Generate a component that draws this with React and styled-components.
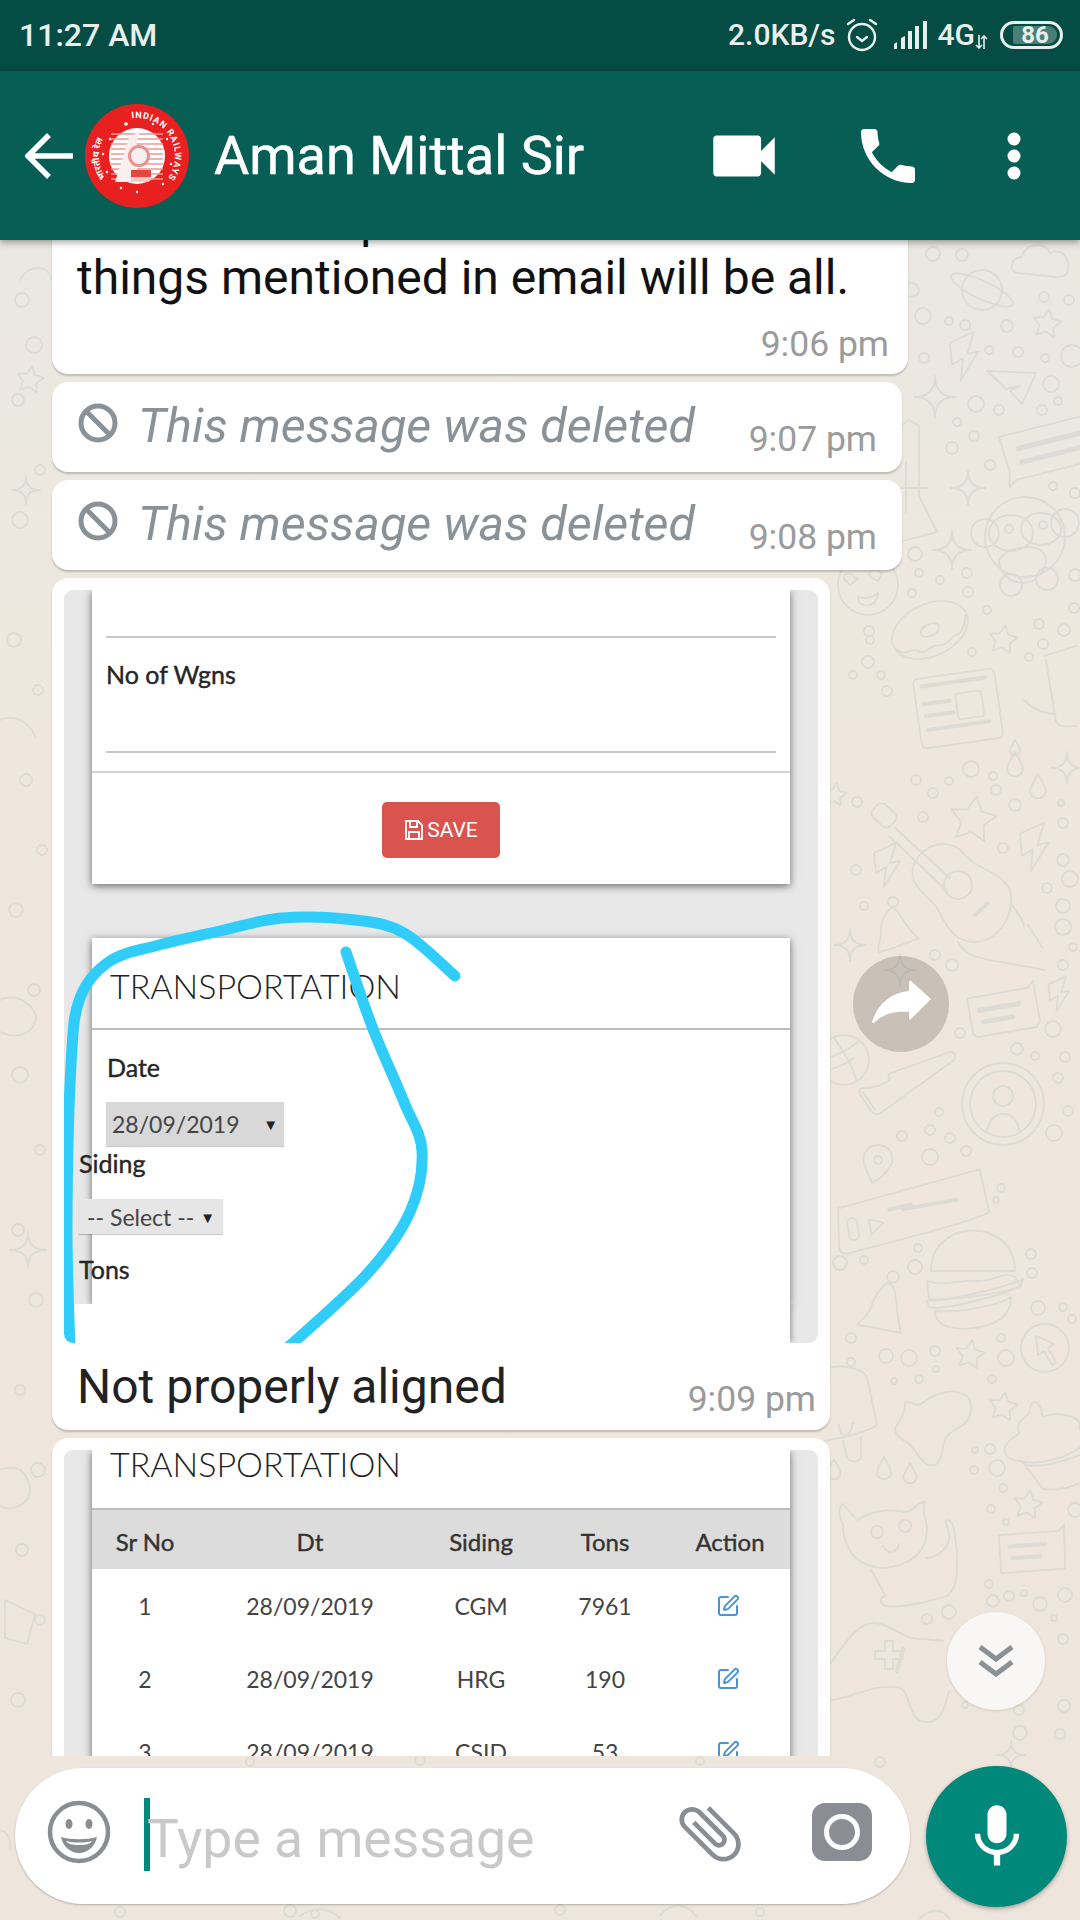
import React from "react";
import styled, { createGlobalStyle } from "styled-components";
import { SquarePen } from "lucide-react";

const GlobalStyle = createGlobalStyle`
  html, body {
    margin: 0;
    padding: 0;
    width: 1080px;
    height: 1920px;
    overflow: hidden;
    font-family: Roboto, "Liberation Sans", sans-serif;
  }
  * { box-sizing: border-box; }
`;

const Screen = styled.div`
  position: relative;
  isolation: isolate;
  width: 1080px;
  height: 1920px;
  display: flex;
  flex-direction: column;
  overflow: hidden;
  background: linear-gradient(180deg, #e8e7e0 0%, #ecE8e0 24%, #efe7de 38%, #eee6dd 100%);
`;

const WallpaperSvg = styled.svg`
  position: absolute;
  inset: 0;
  z-index: -1;
  fill: none;
  stroke: #dcdbd5;
  stroke-width: 1.8;
  stroke-linejoin: round;
  stroke-linecap: round;
`;

const StatusBar = styled.div`
  height: 71px;
  flex-shrink: 0;
  background: #054c44;
  color: #e8f0ee;
  display: flex;
  align-items: center;
  justify-content: space-between;
  padding: 0 17px 2px 19px;
  font-weight: 500;
  font-size: 32px;
`;

const StatusRight = styled.div`
  display: flex;
  align-items: center;
`;

const StatusText = styled.span`
  font-size: ${(p) => p.$size || 30}px;
  margin-left: ${(p) => p.$left || 0}px;
`;

const Battery = styled.div`
  margin-left: 12px;
  width: 63px;
  height: 28px;
  border: 3px solid #e8f0ee;
  border-radius: 14px;
  padding: 2px;
  display: flex;
`;

const BatteryFill = styled.div`
  margin-left: 8px;
  width: 44px;
  height: 100%;
  background: #4a7f75;
  border-radius: 2px 9px 9px 2px;
  display: flex;
  align-items: center;
  justify-content: center;
  font-size: 24px;
  font-weight: 700;
`;

const Header = styled.header`
  position: relative;
  z-index: 2;
  height: 169px;
  flex-shrink: 0;
  background: #075e55;
  box-shadow: 0 2px 7px rgba(0, 0, 0, 0.4);
  display: flex;
  align-items: center;
  padding-left: 25px;
  color: #fff;
`;

const Avatar = styled.svg`
  margin-left: 12px;
  width: 104px;
  height: 104px;
  flex-shrink: 0;
`;

const ContactName = styled.div`
  margin-left: 25px;
  flex: 1;
  font-size: 54px;
  font-weight: 400;
  -webkit-text-stroke: 0.5px #fff;
`;

const HeaderIcon = styled.svg`
  flex-shrink: 0;
  fill: #fff;
  margin-right: ${(p) => p.$right}px;
`;

const List = styled.main`
  height: 1516px;
  flex-shrink: 0;
  overflow: hidden;
  display: flex;
  flex-direction: column;
  align-items: flex-start;
  gap: 8px;
  padding-left: 52px;
`;

const Bubble = styled.div`
  flex-shrink: 0;
  width: ${(p) => p.$width}px;
  background: #fff;
  border-radius: 16px;
  box-shadow: 0 2px 2px rgba(0, 0, 0, 0.2);
`;

const TextBubble = styled(Bubble)`
  margin-top: -48px;
  padding: 0 19px 0 25px;
`;

const MessageText = styled.div`
  font-size: 48px;
  line-height: 57px;
  color: #111;
  white-space: nowrap;
`;

const Time = styled.div`
  font-size: 35.5px;
  line-height: 40px;
  color: #9b9b9b;
  text-align: right;
  white-space: nowrap;
`;

const TextTime = styled(Time)`
  padding: 18px 0 10px;
`;

const DeletedBubble = styled(Bubble)`
  height: 90px;
  display: flex;
  align-items: center;
  padding: 0 25px 0 26px;
`;

const DeletedIcon = styled.svg`
  flex-shrink: 0;
  margin-top: -8px;
`;

const DeletedText = styled.div`
  flex: 1;
  margin: -4px 0 0 20px;
  font-size: 48.5px;
  font-style: italic;
  color: #8a9298;
  white-space: nowrap;
`;

const DeletedTime = styled(Time)`
  margin-top: 24px;
`;

const ImageBubble = styled(Bubble)`
  padding: 12px 12px 0;
`;

const Shot = styled.div`
  position: relative;
  width: 754px;
  height: ${(p) => p.$height}px;
  background: #e8e8e8;
  border-radius: 9px;
  overflow: hidden;
  font-family: Lato, "Noto Sans", sans-serif;
  color: #222;
`;

const ShotCard = styled.div`
  margin: 0 28px;
  background: #fff;
  box-shadow: 0 2px 8px rgba(0, 0, 0, 0.55);
  height: ${(p) => p.$height}px;
  margin-bottom: ${(p) => p.$bottom || 0}px;
`;

const Field = styled.div`
  margin: 0 14px;
  height: ${(p) => p.$height}px;
  border-bottom: 2px solid #c9c9c9;
  padding-top: ${(p) => p.$top || 0}px;
`;

const Label = styled.div`
  font-size: 25px;
  line-height: 30px;
  font-weight: 400;
  -webkit-text-stroke: 0.4px #262626;
  color: #262626;
  margin-left: ${(p) => p.$left || 0}px;
  margin-top: ${(p) => p.$top || 0}px;
`;

const CardFooter = styled.div`
  margin-top: 18px;
  border-top: 2px solid #d2d2d2;
  display: flex;
  justify-content: center;
  padding-top: 29px;
`;

const SaveButton = styled.div`
  width: 118px;
  height: 56px;
  background: #d9534f;
  border-radius: 5px;
  color: #fff;
  font-family: Roboto, sans-serif;
  font-size: 21px;
  display: flex;
  align-items: center;
  justify-content: center;
  gap: 3px;
`;

const CardTitle = styled.div`
  height: ${(p) => p.$height}px;
  padding: ${(p) => p.$top}px 0 0 ${(p) => p.$left}px;
  border-bottom: 2px solid #bdbdbd;
  font-size: 34px;
  line-height: ${(p) => p.$line}px;
  font-weight: 300;
  color: #222;
`;

const SelectBox = styled.div`
  margin-left: ${(p) => p.$left}px;
  margin-top: ${(p) => p.$top}px;
  width: ${(p) => p.$width}px;
  height: ${(p) => p.$height}px;
  background: ${(p) => p.$bg};
  box-shadow: 0 1px 1px rgba(0, 0, 0, 0.2);
  font-size: 23px;
  color: #444;
  display: flex;
  align-items: center;
  justify-content: space-between;
  padding: 0 ${(p) => p.$pad}px;
`;

const Caret = styled.span`
  font-size: 15px;
  color: #222;
`;

const ShotFiller = styled.div`
  position: relative;
  height: 39px;
  margin-right: 28px;
  background: #fff;
  box-shadow: 3px 0 5px -1px rgba(0, 0, 0, 0.3);
  clip-path: inset(0 -8px 0 0);
`;

const InkSvg = styled.svg`
  position: absolute;
  left: 0;
  top: 0;
  fill: none;
  stroke: #30cdfb;
  stroke-width: 11;
  stroke-linecap: round;
  stroke-linejoin: round;
`;

const CaptionRow = styled.div`
  height: 87px;
  display: flex;
  align-items: center;
  justify-content: space-between;
  padding: 0 0 0 13px;
`;

const Caption = styled.div`
  font-size: 48px;
  color: #222;
`;

const CaptionTime = styled(Time)`
  margin-top: 24px;
  margin-right: 2px;
`;

const TableGrid = styled.div`
  display: grid;
  grid-template-columns: 106px 224px 118px 130px 120px;
  text-align: center;
  align-items: center;
`;

const TableHead = styled(TableGrid)`
  height: 59px;
  background: #dcdcdc;
  font-size: 24px;
  font-weight: 400;
  -webkit-text-stroke: 0.4px #333;
  color: #333;
  padding-top: 3px;
`;

const TableRow = styled(TableGrid)`
  height: 73px;
  font-size: 23px;
  color: #444;
`;

const EditCell = styled.div`
  display: flex;
  justify-content: center;
  color: #4b93d8;
  padding-right: 4px;
`;

const Footer = styled.footer`
  flex: 1;
  display: flex;
  align-items: flex-start;
  padding: 12px 0 0 15px;
`;

const Composer = styled.div`
  width: 895px;
  height: 136px;
  background: #fff;
  border-radius: 68px;
  box-shadow: 0 1px 2px rgba(0, 0, 0, 0.25);
  display: flex;
  align-items: center;
  padding-left: 32px;
`;

const TypeCaret = styled.div`
  width: 6px;
  height: 73px;
  background: #00897a;
  margin-left: 33px;
  flex-shrink: 0;
  margin-top: -3px;
`;

const Placeholder = styled.div`
  flex: 1;
  font-size: 53.5px;
  color: #c9c9c9;
  margin: 5px 0 0 -3px;
  white-space: nowrap;
`;

const ClipIcon = styled.svg`
  flex-shrink: 0;
  margin-right: 64px;
  margin-top: -6px;
  transform: rotate(-45deg);
  fill: #8a8e94;
`;

const CameraIcon = styled.svg`
  flex-shrink: 0;
  margin-right: 38px;
  margin-top: -8px;
`;

const MicButton = styled.div`
  width: 141px;
  height: 141px;
  margin: -2px 0 0 16px;
  border-radius: 50%;
  background: #00897a;
  box-shadow: 0 2px 4px rgba(0, 0, 0, 0.3);
  display: flex;
  align-items: center;
  justify-content: center;
  fill: #fff;
`;

const RoundButton = styled.div`
  position: absolute;
  left: ${(p) => p.$x - p.$r}px;
  top: ${(p) => p.$y - p.$r}px;
  width: ${(p) => p.$r * 2}px;
  height: ${(p) => p.$r * 2}px;
  border-radius: 50%;
  background: ${(p) => p.$bg};
  box-shadow: ${(p) => p.$shadow || "none"};
  display: flex;
  align-items: center;
  justify-content: center;
`;

const star = (x, y, r) => {
  let d = "";
  for (let i = 0; i < 10; i++) {
    const a = (Math.PI / 5) * i - Math.PI / 2 + 0.15;
    const rad = i % 2 ? r * 0.5 : r;
    d += `${i ? "L" : "M"}${x + Math.cos(a) * rad} ${y + Math.sin(a) * rad}`;
  }
  return d + "Z";
};
const sparkle = (x, y, r) =>
  `M${x} ${y - r}Q${x} ${y} ${x + r} ${y}Q${x} ${y} ${x} ${y + r}Q${x} ${y} ${x - r} ${y}Q${x} ${y} ${x} ${y - r}Z`;
const bolt = (x, y, s) =>
  `M${x + 10 * s} ${y - 22 * s}L${x - 12 * s} ${y - 12 * s}L${x - 10 * s} ${y + 8 * s}L${x} ${y + 2 * s}L${x - 2 * s} ${y + 22 * s}L${x + 14 * s} ${y - 4 * s}L${x + 4 * s} ${y - 2 * s}Z`;
const drop = (x, y, s) =>
  `M${x} ${y - 12 * s}C${x + 4 * s} ${y - 4 * s} ${x + 8 * s} ${y} ${x + 7 * s} ${y + 5 * s}C${x + 5 * s} ${y + 12 * s} ${x - 5 * s} ${y + 12 * s} ${x - 7 * s} ${y + 5 * s}C${x - 8 * s} ${y} ${x - 4 * s} ${y - 4 * s} ${x} ${y - 12 * s}Z`;

// smooth line through page points, moved into the screenshot's own coordinates
const inkLine = (points) => {
  const pts = points.map(([x, y]) => [x - 64, y - 590]);
  let d = `M${pts[0][0]} ${pts[0][1]}`;
  for (let i = 0; i < pts.length - 1; i++) {
    const a = pts[i - 1] || pts[i];
    const b = pts[i];
    const c = pts[i + 1];
    const e = pts[i + 2] || c;
    d += `C${b[0] + (c[0] - a[0]) / 6} ${b[1] + (c[1] - a[1]) / 6} ${c[0] - (e[0] - b[0]) / 6} ${c[1] - (e[1] - b[1]) / 6} ${c[0]} ${c[1]}`;
  }
  return d;
};

const inkTop = [
  [455, 976], [404, 933], [355, 920], [282, 918], [220, 931], [159, 945], [110, 961],
  [80, 998], [71, 1065], [67, 1225], [70, 1350],
];
const inkRight = [
  [346, 952], [373, 1029], [404, 1102], [422, 1151], [410, 1212], [367, 1274], [285, 1350],
];

const dots = [
  [933, 254, 7], [962, 255, 6], [912, 290, 7], [923, 316, 8], [949, 321, 4], [965, 325, 5], [1007, 326, 6],
  [1044, 297, 5], [1069, 300, 5], [924, 358, 5], [989, 350, 4], [1018, 352, 5], [1045, 358, 4], [1072, 356, 11],
  [1051, 384, 8], [1058, 401, 4], [976, 404, 8], [999, 410, 5], [1042, 410, 5], [957, 422, 4], [974, 436, 5],
  [952, 448, 6], [990, 465, 5], [1053, 486, 4], [1075, 493, 5], [915, 554, 7], [919, 573, 4], [940, 580, 4],
  [967, 573, 5], [912, 593, 4], [968, 592, 5], [1075, 575, 6], [1074, 608, 5], [987, 610, 4], [1039, 624, 5],
  [1064, 630, 6], [1043, 644, 5], [972, 652, 4], [1029, 657, 4], [869, 631, 5], [870, 640, 4], [868, 662, 6],
  [853, 675, 4], [881, 675, 4], [887, 691, 5], [971, 769, 8], [993, 776, 4], [916, 780, 5], [949, 781, 4],
  [933, 793, 5], [996, 790, 5], [1015, 805, 6], [1061, 803, 3], [857, 802, 5], [923, 817, 5], [1003, 848, 5],
  [1063, 823, 5], [1063, 860, 6], [1070, 879, 8], [856, 870, 5], [1047, 888, 5], [864, 906, 4], [1063, 906, 7],
  [1063, 927, 8], [1073, 947, 4], [935, 955, 5], [952, 965, 6], [1063, 965, 5], [1053, 1029, 8], [960, 1033, 5],
  [1017, 1049, 6], [1035, 1056, 4], [1065, 1057, 5], [1058, 1078, 5], [1068, 1111, 5], [939, 1112, 4], [902, 1136, 5],
  [930, 1130, 5], [950, 1138, 5], [1054, 1133, 8], [930, 1157, 8], [966, 1151, 5], [1001, 1188, 4], [996, 1200, 3],
  [840, 1263, 7], [864, 1260, 4], [915, 1267, 7], [918, 1248, 4], [1031, 1254, 5], [1032, 1273, 5], [1038, 1308, 7],
  [1063, 1307, 4], [1072, 1319, 4], [851, 1338, 5], [851, 1362, 4], [886, 1356, 7], [909, 1358, 8], [935, 1351, 5],
  [936, 1369, 3], [894, 1381, 3], [919, 1379, 4], [1001, 1338, 4], [1006, 1358, 8], [992, 1379, 4], [990, 1449, 5],
  [975, 1450, 3], [974, 1470, 4], [997, 1468, 8], [1003, 1488, 4], [991, 1509, 4], [1006, 1522, 3], [1075, 1510, 7],
  [989, 1584, 4], [993, 1601, 6], [1009, 1596, 5], [1024, 1593, 3], [1040, 1604, 7], [1065, 1595, 7], [1054, 1618, 3],
  [927, 1619, 5], [949, 1612, 7], [1063, 1639, 5], [1064, 1706, 6], [1019, 1710, 5], [965, 1705, 3], [1020, 1733, 7],
  [1060, 1734, 5], [22, 300, 7], [34, 345, 8], [18, 400, 6], [40, 470, 5], [20, 520, 8], [14, 640, 7], [38, 690, 5],
  [26, 780, 6], [42, 850, 5], [16, 910, 7], [34, 990, 6], [20, 1075, 8], [40, 1150, 5], [18, 1230, 6], [36, 1300, 7],
  [20, 1390, 5], [38, 1470, 7], [22, 1550, 6], [40, 1620, 5], [18, 1700, 7], [250, 1762, 4], [420, 1760, 5],
  [700, 1761, 4], [880, 1762, 5], [120, 1912, 5], [290, 1911, 6], [315, 1914, 4], [560, 1910, 5], [760, 1912, 4],
];

const Doodles = () => (
  <WallpaperSvg width="1080" height="1920" viewBox="0 0 1080 1920">
    {dots.map(([x, y, r]) => (
      <circle key={`${x}-${y}`} cx={x} cy={y} r={r} />
    ))}
    <path d={star(1047, 324, 15)} />
    <path d={star(1003, 640, 15)} />
    <path d={star(973, 820, 24)} />
    <path d={star(970, 1355, 15)} />
    <path d={star(1003, 1407, 15)} />
    <path d={star(1028, 1505, 15)} />
    <path d={star(30, 380, 14)} />
    <path d={star(835, 795, 12)} />
    <path d={sparkle(935, 397, 21)} />
    <path d={sparkle(968, 488, 17)} />
    <path d={sparkle(952, 550, 19)} />
    <path d={sparkle(1067, 768, 16)} />
    <path d={sparkle(900, 970, 16)} />
    <path d={sparkle(850, 945, 16)} />
    <path d={sparkle(1011, 1755, 14)} />
    <path d={sparkle(26, 490, 14)} />
    <path d={sparkle(28, 1250, 18)} />
    <path d={bolt(963, 356, 1.1)} />
    <path d={bolt(1033, 847, 1.1)} />
    <path d={bolt(886, 865, 1)} />
    <path d={bolt(1058, 994, 0.8)} />
    <path d={drop(1015, 765, 1.1)} />
    <path d={drop(1038, 787, 1.1)} />
    <path d={drop(1015, 748, 0.7)} />
    <path d={drop(884, 1469, 1)} />
    <path d={drop(910, 1474, 0.9)} />
    <path d={drop(834, 1470, 0.9)} />

    <g transform="translate(982 290)">
      <circle r="20" />
      <ellipse rx="34" ry="9" transform="rotate(25)" />
    </g>
    <path d="M1018 273c-10 0-8-16 4-16 2-14 24-16 28-4 10-6 20 4 18 16 0 6-6 8-12 8z" />
    <path d="M987 371l49 2-14 31-12-13 10-5-14 3z" />
    <g transform="translate(1045 448) rotate(-14)">
      <path d="M-42 -22h84v46h-78l-8 6 4-16z" />
      <path d="M-26 -6h64M-26 8h64" strokeWidth="5" />
    </g>
    <path d="M895 430l14-10 10 6v70l18 36-60 16M906 462v50M897 488h30" />
    <g transform="translate(1025 537)">
      <circle r="40" />
      <circle cx="-40" cy="-4" r="14" />
      <circle cx="40" cy="-14" r="14" />
      <ellipse cx="-14" cy="-4" rx="22" ry="18" />
      <ellipse cx="16" cy="-8" rx="20" ry="16" />
      <circle cx="-16" cy="-8" r="4" />
      <circle cx="18" cy="-12" r="4" />
      <path d="M-26 24c4-14 40-20 46-6 4 12-8 28-22 28-14 0-24-12-24-22z" />
      <ellipse cx="-14" cy="48" rx="11" ry="11" />
      <ellipse cx="22" cy="42" rx="11" ry="11" />
    </g>
    <g transform="translate(868 585)">
      <circle r="30" />
      <path d="M-10 -6l-8 6-6-6c-2-6 8-8 10-2zM14 -12l-4 8-8-4c-4-6 6-10 8-6zM-10 12c8 2 16 0 20-4 0 8-6 14-14 12-4 0-6-4-6-8z" />
    </g>
    <g transform="translate(930 630) rotate(-25)">
      <ellipse rx="40" ry="26" />
      <ellipse rx="10" ry="6" />
      <path d="M-38 4c6 12 12 2 18 10 6 8 14-2 22 4 8 4 14-4 20-2 6 0 14-8 16-14" />
    </g>
    <g transform="translate(955 708) rotate(-8)">
      <rect x="-38" y="-34" width="82" height="70" rx="5" />
      <path d="M-30 -26h64M-30 -8h26M-30 4h28M-30 18h62" strokeWidth="4" />
      <rect x="2" y="-14" width="26" height="26" rx="3" />
    </g>
    <path d="M1044 656l32-10M1046 660l10 62c4 6 14 4 20 4M1024 700c10 10 20 14 32 14" />
    <g transform="translate(887 818) rotate(42)">
      <rect x="-16" y="-9" width="24" height="18" rx="6" />
    </g>
    <path d="M895 828L950 878M889 836L946 890" />
    <circle cx="958" cy="885" r="14" />
    <path d="M916 860C925 845 945 838 960 850C975 870 1000 870 1010 890C1015 915 1000 940 975 942C950 942 945 920 935 905C920 890 905 880 916 860Z" />
    <path d="M975 915L988 903" strokeWidth="4" />
    <path d="M958 942C968 962 990 958 1044 970M1012 905c6 10 12 14 12 22M1028 925l14 22" />
    <g transform="translate(905 930)">
      <circle cx="-12" cy="-28" r="5" />
      <path d="M-14 -22c-8 6-10 16-10 24 0 8-4 14-2 20 12-2 24-8 40-14-10-6-14-16-20-24-2-4-4-6-8-6z" />
    </g>
    <g transform="translate(1000 1013) rotate(-10)">
      <path d="M-30 -20h62l6-6v40l-4 6h-60l-4-4z" />
      <path d="M-20 -6h40M-18 6h30" strokeWidth="5" />
    </g>
    <g transform="translate(844 1060)">
      <circle r="25" />
      <path d="M-25 0c14-2 36-14 40-20M-10 -22c10 14 20 30 22 42M-22 12c10-2 24-8 32-14" />
    </g>
    <path d="M888 1074l62-22c6 0 6 4 4 8l-72 52c-4 4-8 2-10 0l-12-18c-2-4 0-6 4-6 10 0 20-4 26-8zM875 1110l-12-18" />
    <g transform="translate(1003 1104)">
      <circle r="41" />
      <circle r="33" />
      <circle cy="-8" r="10" />
      <path d="M-17 28c4-14 10-18 17-18s14 4 17 18" />
    </g>
    <path d="M878 1145c-10 0-16 8-14 18 2 8 6 14 8 20 8-4 16-12 20-20 2-10-4-18-14-18z" />
    <circle cx="878" cy="1160" r="4" />
    <g transform="translate(910 1212) rotate(-10)">
      <path d="M-70 -16l146 -14 2 44c-20 6-70 10-146 16-6 0-8-2-8-8z" />
      <path d="M-20 -6l22-1M-6 -4h54" strokeWidth="4" />
      <path d="M-42 0l14 6-14 10z" />
      <rect x="-64" y="-4" width="10" height="22" rx="5" />
    </g>
    <g transform="translate(973 1287)">
      <path d="M-42 -16c0-54 84-54 84-0z" />
      <path d="M-46 -6c20 6 32-2 52 0 14 0 28-10 36-4l6 10c-20 6-70 14-92 12z" />
      <path d="M-46 14c20 0 80-14 96-22l-2 6c-14 10-80 26-92 22zM-38 24c20 2 60-4 76-14 0 20-14 26-30 30-20 4-46 2-46-16z" />
    </g>
    <g transform="translate(887 1307)">
      <circle cx="6" cy="-30" r="6" />
      <path d="M0 -24c-8 6-14 16-16 24-2 8-10 12-14 18 16 2 34 6 44 8-4-16-4-30-6-40 0-4-2-8-8-10z" />
    </g>
    <g transform="translate(1045 1348)">
      <circle r="24" />
      <path d="M-9 -12l18 8-6 4 8 14-4 3-8-14-6 4z" />
    </g>
    <g transform="translate(853 1403)">
      <path d="M-30 -34c20-6 40 0 44 8l10 48c-10 8-40 14-64 18" />
      <path d="M8 34v18c0 8-12 8-14 2l-4-16" />
      <path d="M-14 22c0 14 12 14 14-2" />
    </g>
    <path d="M905 1403c4-6 10 8 20-2 12-8 26-12 36-8 14 4 12 22 4 30-8 8-20 8-22 24-2 12-4 20-14 18-10-2-14-20-24-24-8-4-12-10-8-16 6-8 8-14 8-22z" />
    <g transform="translate(1047 1443)">
      <path d="M-40 14c-8-12 6-18 12-24-4-12 6-14 10-20 0-6 4-14 8-10 4 2 4 8 6 14 12-6 40-2 36 10l6 16c-10 12-50 28-78 14z" />
      <path d="M-24 20c10 8 44-2 72-14M-22 22l18 24c14 2 30-2 44-10" />
    </g>
    <g transform="translate(913 1540)">
      <path d="M-70 -36c-6 4-4 14 0 20 0 30 20 44 40 44 26-2 44-14 44-40 0-8-6-14-2-26-8 0-12 10-20 10-20-4-34 0-48 8z" />
      <path d="M-42 30c6 10 12 20 14 26-6 2-6 10 4 10 12 2 40-4 58-10 12-8 10-30 10-44-2-14-2-32-10-32-4 2 4 12 2 20-2 10-14 18-22 18" />
      <circle cx="-36" cy="-8" r="6" />
      <circle cx="-8" cy="-14" r="6" />
      <path d="M-30 6c4 8 14 8 16-2" />
    </g>
    <g transform="translate(1030 1553) rotate(-4)">
      <path d="M-30 -20h60l6-6-2 44h-64z" />
      <path d="M-20 -8h36M-18 4h28" strokeWidth="4" />
    </g>
    <g transform="translate(897 1665)">
      <path d="M-66 -2c20-30 30-40 44-40 14 0 30 18 48 16l20 2M-70 36c30-4 40-16 70-14 14 2 10 28 24 34 20 6 24-14 28-30" />
      <path d="M-12 -24h8v10h10v8h-10v10h-8v-10h-10v-8h10z" />
      <path d="M0 6l6-22" strokeWidth="4" />
    </g>
    <path d="M838 1880c10-24 30-30 50-20M300 1916c14-10 30-8 40 2M660 1916c10-14 26-14 36 0M920 1918c10-10 24-10 30 2M0 1830c8 2 12 10 10 20" />
    <path d="M20 280c10-18 30-14 32 0M0 720c14-6 28 0 36 18M0 1000c18-8 36 6 36 20-6 18-24 18-36 12M0 1470c20-8 30 6 30 22-2 14-20 20-30 14M5 1600l30 14-8 30-22-6z" />
  </WallpaperSvg>
);

const RailwayLogo = () => (
  <Avatar viewBox="0 0 104 104">
    <circle cx="52" cy="52" r="52" fill="#e8201f" />
    <path id="logoArcRight" d="M46.7 14.4A38 38 0 0 1 83.1 73.8" fill="none" />
    <path id="logoArcLeft" d="M20.9 73.8A38 38 0 0 1 30.2 20.9" fill="none" />
    <text fontFamily="Roboto, sans-serif" fontWeight="700" fontSize="9" fill="#fff">
      <textPath href="#logoArcRight" textLength="88">INDIAN RAILWAYS</textPath>
    </text>
    <text fontFamily="Noto Sans, sans-serif" fontWeight="700" fontSize="9" fill="#fff">
      <textPath href="#logoArcLeft">भारतीय रेल</textPath>
    </text>
    <circle cx="41" cy="20" r="1.8" fill="#fff" />
    <circle cx="52" cy="52" r="28" fill="#fff" />
    {[30, 35, 40, 45, 50, 55, 60, 65, 70, 75].map((y) => (
      <path key={y} d={`M26 ${y}H78`} stroke="#eb9a96" strokeWidth="1.6" />
    ))}
    <path d="M30 78L44 34l12-8c-8 14-6 40 0 52z" fill="#fbeeee" />
    <circle cx="54" cy="52" r="11" fill="#e9928c" />
    <circle cx="54" cy="52" r="8" fill="#fbeeee" />
    <path d="M46 66h20v7H46z" fill="#e8453f" />
    <path d="M46 73h18v5H46z" fill="#f7c9c6" />
    {[[25, 35], [18, 50], [22, 68], [82, 35], [86, 60], [78, 80], [52, 88], [36, 84], [68, 20]].map(([x, y]) => (
      <circle key={x} cx={x} cy={y} r="1.2" fill="#fff" />
    ))}
  </Avatar>
);

const BlockedIcon = () => (
  <DeletedIcon width="40" height="40" viewBox="0 0 40 40" fill="none" stroke="#8a9298" strokeWidth="5">
    <circle cx="20" cy="20" r="17" />
    <path d="M8 8l24 24" />
  </DeletedIcon>
);

const FormShot = () => (
  <Shot $height={753}>
    <ShotCard $height={294} $bottom={54}>
      <Field $height={48} />
      <Field $height={115} $top={21}>
        <Label>No of Wgns</Label>
      </Field>
      <CardFooter>
        <SaveButton>
          <svg width="20" height="22" viewBox="0 0 20 22" fill="none" stroke="#fff" strokeWidth="1.8">
            <path d="M2 2h12l4 4v14H2zM6 2v6h7V2M5 20v-7h10v7" />
          </svg>
          SAVE
        </SaveButton>
      </CardFooter>
    </ShotCard>
    <ShotCard $height={366}>
      <CardTitle $height={92} $top={30} $left={18} $line={36}>TRANSPORTATION</CardTitle>
      <Label $left={15} $top={22}>Date</Label>
      <SelectBox $left={14} $top={20} $width={178} $height={44} $bg="#d8d8d8" $pad={6}>
        28/09/2019 <Caret>▼</Caret>
      </SelectBox>
      <Label $left={-13} $top={2}>Siding</Label>
      <SelectBox $left={-13} $top={21} $width={144} $height={35} $bg="#e6e6e6" $pad={8}>
        -- Select -- <Caret>▼</Caret>
      </SelectBox>
      <Label $left={-13} $top={20}>Tons</Label>
    </ShotCard>
    <ShotFiller />
    <InkSvg width="754" height="753" viewBox="0 0 754 753">
      <path d={inkLine(inkTop)} />
      <path d={inkLine(inkRight)} />
    </InkSvg>
  </Shot>
);

const rows = [
  ["1", "28/09/2019", "CGM", "7961"],
  ["2", "28/09/2019", "HRG", "190"],
  ["3", "28/09/2019", "CSID", "53"],
];

const TableShot = () => (
  <Shot $height={330}>
    <ShotCard $height={330}>
      <CardTitle $height={60} $top={0} $left={18} $line={28}>TRANSPORTATION</CardTitle>
      <TableHead>
        <div>Sr No</div>
        <div>Dt</div>
        <div>Siding</div>
        <div>Tons</div>
        <div>Action</div>
      </TableHead>
      {rows.map((row) => (
        <TableRow key={row[0]}>
          {row.map((cell, i) => (
            <div key={i}>{cell}</div>
          ))}
          <EditCell>
            <SquarePen size={24} strokeWidth={2} />
          </EditCell>
        </TableRow>
      ))}
    </ShotCard>
  </Shot>
);

export default function App() {
  return (
    <Screen>
      <GlobalStyle />
      <Doodles />
      <StatusBar>
        <span>11:27 AM</span>
        <StatusRight>
          <StatusText>2.0KB/s</StatusText>
          <svg width="32" height="34" viewBox="0 0 32 34" fill="none" stroke="#e8f0ee" strokeWidth="2.4" strokeLinecap="round" style={{ marginLeft: 10 }}>
            <circle cx="16" cy="19" r="13" />
            <path d="M11 19l5 4 5-4M2 6l6-4M30 6l-6-4" />
          </svg>
          <svg width="35" height="30" viewBox="0 0 35 30" fill="#e8f0ee" style={{ marginLeft: 16 }}>
            <path d="M0 24l3-2v7H0zM7 18l4-2v13H7zM14 11h4v18h-4zM21 6h4v23h-4zM29 1h4v28h-4z" />
          </svg>
          <StatusText $left={9} $size={30}>4G</StatusText>
          <svg width="13" height="14" viewBox="0 0 13 14" fill="none" stroke="#e8f0ee" strokeWidth="1.6" style={{ marginTop: 14 }}>
            <path d="M4 0v13M1 10l3 3 3-3M9 14V1M6 4l3-3 3 3" />
          </svg>
          <Battery>
            <BatteryFill>86</BatteryFill>
          </Battery>
        </StatusRight>
      </StatusBar>

      <Header>
        <svg width="48" height="48" viewBox="0 0 48 48" fill="none" stroke="#fff" strokeWidth="5.5">
          <path d="M48 24H5M24 3L3 24l21 21" />
        </svg>
        <RailwayLogo />
        <ContactName>Aman Mittal Sir</ContactName>
        <HeaderIcon $right={67} width="82" height="82" viewBox="0 0 24 24">
          <path d="M17 10.5V7c0-.55-.45-1-1-1H4c-.55 0-1 .45-1 1v10c0 .55.45 1 1 1h12c.55 0 1-.45 1-1v-3.5l4 4v-11l-4 4z" />
        </HeaderIcon>
        <HeaderIcon $right={83} width="72" height="72" viewBox="0 0 24 24">
          <path d="M6.62 10.79c1.44 2.83 3.76 5.14 6.59 6.59l2.2-2.2c.27-.27.67-.36 1.02-.24 1.12.37 2.33.57 3.57.57.55 0 1 .45 1 1V20c0 .55-.45 1-1 1-9.39 0-17-7.61-17-17 0-.55.45-1 1-1h3.5c.55 0 1 .45 1 1 0 1.25.2 2.45.57 3.57.11.35.03.74-.25 1.02l-2.2 2.2z" />
        </HeaderIcon>
        <HeaderIcon $right={59} width="14" height="48" viewBox="0 0 14 48">
          <circle cx="7" cy="7" r="6.5" />
          <circle cx="7" cy="24" r="6.5" />
          <circle cx="7" cy="41" r="6.5" />
        </HeaderIcon>
      </Header>

      <List>
        <TextBubble $width={856}>
          <MessageText>
            These are all points
            <br />
            things mentioned in email will be all.
          </MessageText>
          <TextTime>9:06 pm</TextTime>
        </TextBubble>
        <DeletedBubble $width={850}>
          <BlockedIcon />
          <DeletedText>This message was deleted</DeletedText>
          <DeletedTime>9:07 pm</DeletedTime>
        </DeletedBubble>
        <DeletedBubble $width={850}>
          <BlockedIcon />
          <DeletedText>This message was deleted</DeletedText>
          <DeletedTime>9:08 pm</DeletedTime>
        </DeletedBubble>
        <ImageBubble $width={778}>
          <FormShot />
          <CaptionRow>
            <Caption>Not properly aligned</Caption>
            <CaptionTime>9:09 pm</CaptionTime>
          </CaptionRow>
        </ImageBubble>
        <ImageBubble $width={778}>
          <TableShot />
        </ImageBubble>
      </List>

      <Footer>
        <Composer>
          <svg width="64" height="64" viewBox="0 0 64 64" fill="none" stroke="#8a8e94" strokeWidth="4.5" style={{ flexShrink: 0, marginTop: -8 }}>
            <circle cx="32" cy="32" r="29" />
            <ellipse cx="22" cy="24" rx="3.5" ry="5" fill="#8a8e94" stroke="none" />
            <ellipse cx="42" cy="24" rx="3.5" ry="5" fill="#8a8e94" stroke="none" />
            <path d="M14 37c10 3 26 3 36 0-2 10-10 16-18 16s-16-6-18-16z" fill="#8a8e94" stroke="none" />
            <path d="M19 41c8 2 18 2 26 0-2 3-6 4-13 4s-11-1-13-4z" fill="#fff" stroke="none" />
          </svg>
          <TypeCaret />
          <Placeholder>Type a message</Placeholder>
          <ClipIcon width="76" height="76" viewBox="0 0 24 24">
            <path d="M16.5 6v11.5c0 2.21-1.79 4-4 4s-4-1.79-4-4V5c0-1.38 1.12-2.5 2.5-2.5s2.5 1.12 2.5 2.5v10.5c0 .55-.45 1-1 1s-1-.45-1-1V6H10v9.5c0 1.38 1.12 2.5 2.5 2.5s2.5-1.12 2.5-2.5V5c0-2.21-1.79-4-4-4S7 2.79 7 5v12.5c0 3.04 2.46 5.5 5.5 5.5s5.5-2.46 5.5-5.5V6h-1.5z" />
          </ClipIcon>
          <CameraIcon width="60" height="58" viewBox="0 0 60 58">
            <rect width="60" height="58" rx="13" fill="#8a8e94" />
            <circle cx="30" cy="29" r="15.5" fill="#8a8e94" stroke="#fff" strokeWidth="5" />
          </CameraIcon>
        </Composer>
        <MicButton>
          <svg width="76" height="76" viewBox="0 0 24 24">
            <path d="M12 14c1.66 0 3-1.34 3-3V5c0-1.66-1.34-3-3-3S9 3.34 9 5v6c0 1.66 1.34 3 3 3zm5.3-3c0 3-2.54 5.1-5.3 5.1S6.7 14 6.7 11H5c0 3.41 2.72 6.23 6 6.72V21h2v-3.28c3.28-.48 6-3.3 6-6.72h-1.7z" />
          </svg>
        </MicButton>
      </Footer>

      <RoundButton $x={901} $y={1004} $r={48} $bg="rgba(112, 104, 96, 0.3)">
        <svg width="96" height="96" viewBox="0 0 96 96" fill="#fff">
          <path d="M78 43L58 25Q56 24 56 27V35C36 37 24 50 19 66Q20 68 22 66C30 58 42 55 56 56V62Q56 65 58 63Z" />
        </svg>
      </RoundButton>
      <RoundButton $x={996} $y={1661} $r={49} $bg="#f8f7f6" $shadow="0 1px 3px rgba(0,0,0,0.12)">
        <svg width="36" height="34" viewBox="0 0 36 34" fill="none" stroke="#8a9296" strokeWidth="5">
          <path d="M2 3l16 12L34 3M2 18l16 12 16-12" />
        </svg>
      </RoundButton>
    </Screen>
  );
}
